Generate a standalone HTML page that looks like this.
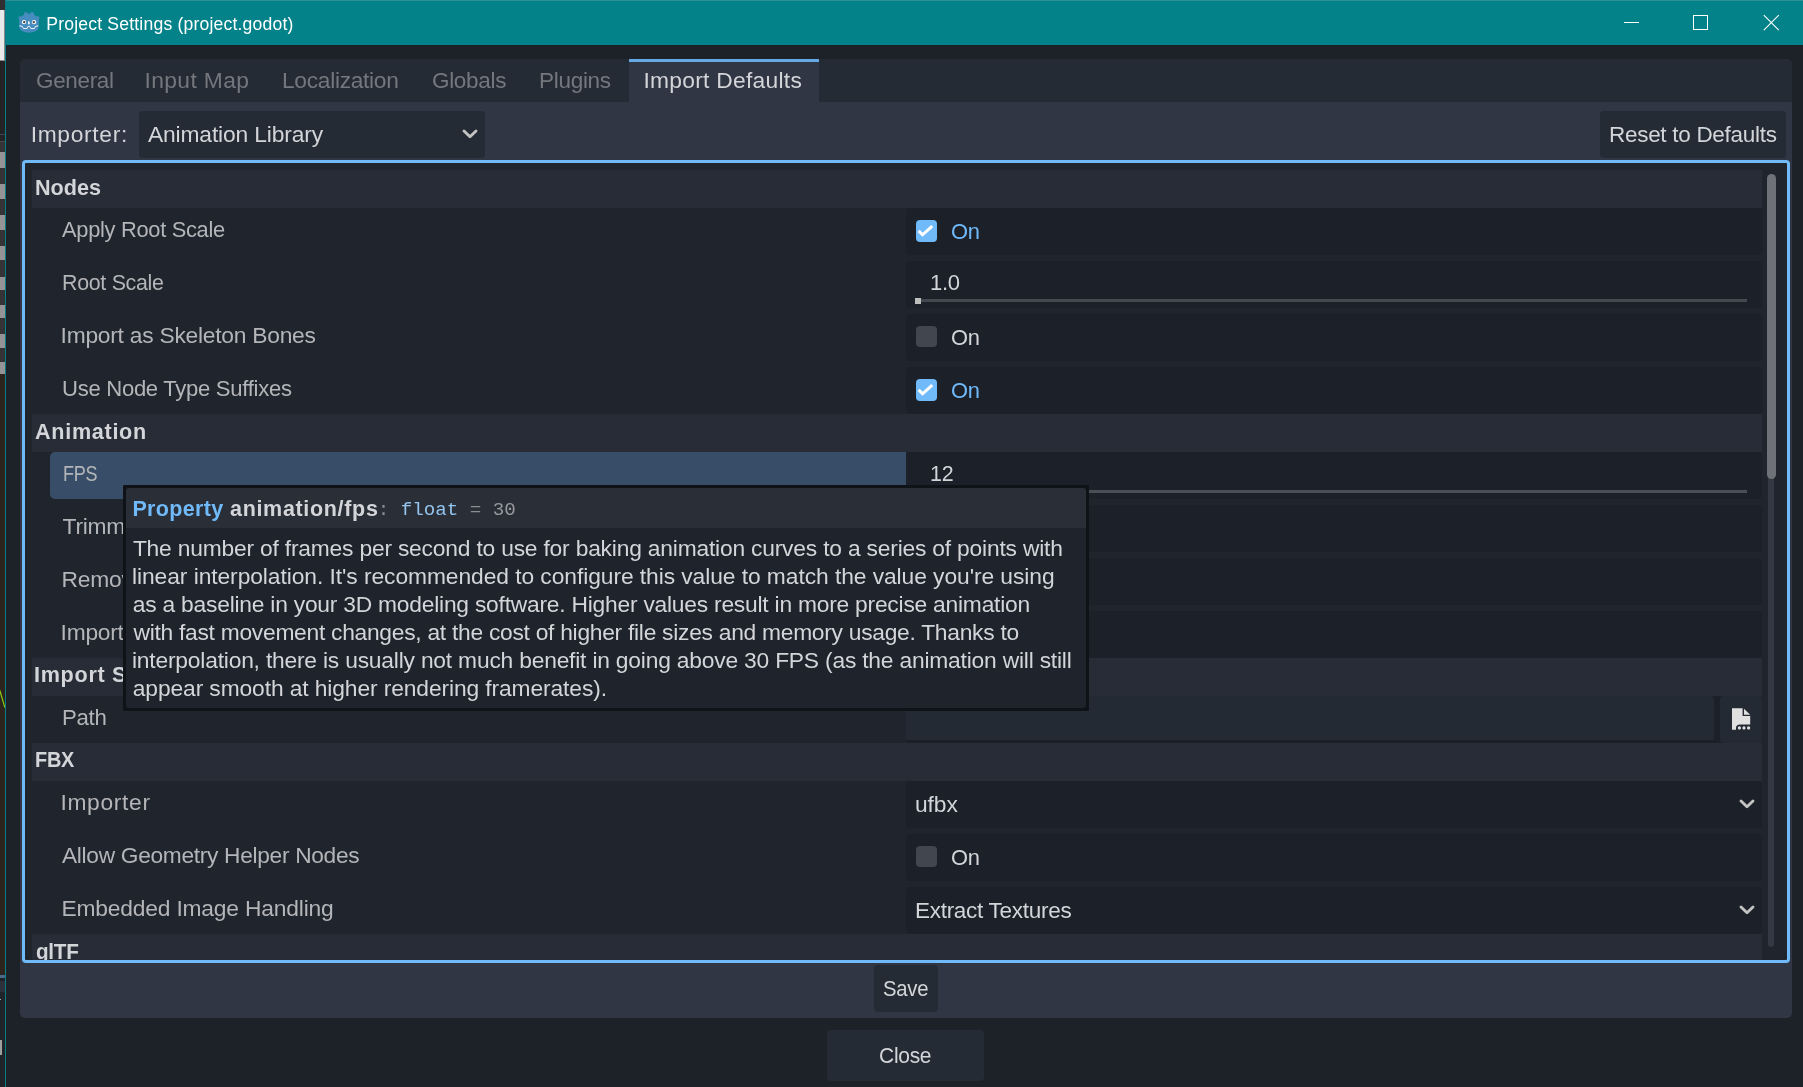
<!DOCTYPE html>
<html lang="en"><head><meta charset="utf-8"><title>Project Settings (project.godot)</title>
<style>
html,body{margin:0;padding:0}
body{width:1803px;height:1087px;overflow:hidden;position:relative;background:#1d2229;font-family:"Liberation Sans",sans-serif}
div,span.t,svg{position:absolute}
span.t{white-space:pre;display:block}
#root{left:0;top:0;width:1803px;height:1087px;overflow:hidden;will-change:transform}
</style></head><body><div id="root">

<div style="left:0px;top:0px;width:5px;height:1087px;background:#232325;"></div>
<div style="left:0px;top:0px;width:5px;height:10px;background:#303032;"></div>
<div style="left:0px;top:10px;width:5px;height:51px;background:#8a8a8c;"></div>
<div style="left:0px;top:10px;width:4px;height:50px;background:#e9e9ea;"></div>
<div style="left:0px;top:134px;width:5px;height:1px;background:#3a4656;"></div>
<div style="left:0px;top:141px;width:5px;height:1px;background:#4a4a4c;"></div>
<div style="left:0px;top:142px;width:5px;height:232px;background:#343436;"></div>
<div style="left:0px;top:152px;width:5px;height:16px;background:#949496;"></div>
<div style="left:0px;top:184px;width:5px;height:15px;background:#949496;"></div>
<div style="left:0px;top:215px;width:5px;height:15px;background:#949496;"></div>
<div style="left:0px;top:246px;width:5px;height:14px;background:#949496;"></div>
<div style="left:0px;top:277px;width:5px;height:13px;background:#949496;"></div>
<div style="left:0px;top:305px;width:5px;height:13px;background:#949496;"></div>
<div style="left:0px;top:334px;width:5px;height:14px;background:#949496;"></div>
<div style="left:0px;top:362px;width:5px;height:12px;background:#949496;"></div>
<div style="left:0px;top:374px;width:5px;height:601px;background:#2d251d;"></div>
<svg style="left:0;top:685px" width="5" height="28" viewBox="0 0 5 28"><path d="M-0.3 5.2 L5 22.8" stroke="#8ccf12" stroke-width="1.2" fill="none"/></svg>
<div style="left:0px;top:975px;width:5px;height:3px;background:#4a6a8a;"></div>
<div style="left:0px;top:978px;width:5px;height:3px;background:#1e2228;"></div>
<div style="left:0px;top:981px;width:5px;height:11px;background:#2c313c;"></div>
<div style="left:0px;top:992px;width:5px;height:95px;background:#1f232a;"></div>
<div style="left:0px;top:999px;width:1px;height:1px;background:#b0b0b0;"></div>
<div style="left:0px;top:1040px;width:1.5px;height:15px;background:#a0a0a0;"></div>
<div style="left:5px;top:0px;width:1px;height:1087px;background:#0a7c84;"></div>
<div style="left:6px;top:0px;width:1797px;height:45px;background:#03828a;"></div>
<div style="left:6px;top:0px;width:1797px;height:1px;background:#2b9198;"></div>
<svg style="left:17px;top:11px" width="24" height="23" viewBox="0 0 24 23"><path d="M1.2 6.9 L2.9 5 L4.3 5.4 L6 4.5 Q6.6 3.8 7.2 3.4 L7.2 1.4 Q8.6 0.9 10.1 1.2 L10.5 2.7 Q12 2.5 13.5 2.7 L13.9 1.2 Q15.4 0.9 16.8 1.4 L16.8 3.4 Q17.4 3.8 18 4.5 L19.7 5.4 L21.1 5 L22.8 6.9 L21.8 8.4 Q21.9 11 21.7 14.6 Q21.7 18 20.5 19 Q17 21.7 12 21.7 Q7 21.7 3.5 19 Q2.3 18 2.3 14.6 Q2.1 11 2.2 8.4 Z" fill="#478cbf"/><circle cx="7" cy="11.2" r="2.1" fill="#fff"/><circle cx="17" cy="11.2" r="2.1" fill="#fff"/><circle cx="7.2" cy="11.2" r="1.15" fill="#414042"/><circle cx="16.8" cy="11.2" r="1.15" fill="#414042"/><rect x="11.05" y="10.3" width="1.6" height="3.2" rx=".8" fill="#fff"/><path d="M2.3 14.9 L5.2 15.3 L6.5 17.5 H10.1 L11 15.4 H12.6 L13.9 17.5 H17.5 L18.4 15.3 L21.3 14.9" stroke="#fff" stroke-width=".9" fill="none"/></svg>
<div style="left:1624px;top:22px;width:15px;height:1px;background:#fff;"></div>
<div style="left:1693px;top:15px;width:13px;height:13px;background:transparent;border:1px solid #fff"></div>
<svg style="left:1762px;top:14px" width="18" height="18" viewBox="0 0 18 18"><path d="M1.8 1.2 L16.8 16.2 M16.8 1.2 L1.8 16.2" stroke="#fff" stroke-width="1.1" fill="none"/></svg>
<div style="left:20px;top:59px;width:1772px;height:43px;background:#252b34;border-radius:5px 5px 0 0"></div>
<div style="left:20px;top:102px;width:1772px;height:916px;background:#303643;border-radius:0 0 5px 5px"></div>
<div style="left:629px;top:59px;width:190px;height:43px;background:#303643;"></div>
<div style="left:629px;top:59px;width:190px;height:3px;background:#67a9e2;"></div>
<div style="left:139px;top:111px;width:346px;height:47px;background:#252b34;border-radius:4px"></div>
<div style="left:1600px;top:111px;width:186px;height:47px;background:#252b34;border-radius:4px"></div>
<svg style="left:460px;top:126px" width="20" height="16" viewBox="0 0 20 16"><path d="M4 5 L10 10.8 L16 5" stroke="#c3c3c3" stroke-width="2.9" stroke-linecap="round" stroke-linejoin="round" fill="none"/></svg>
<div style="left:22px;top:160px;width:1762px;height:797px;background:#20242d;border:3px solid #70bafa;border-radius:4px"></div>
<div style="left:25px;top:163px;width:1762px;height:797px;overflow:hidden">
<div style="left:7px;top:7px;width:1730px;height:38px;background:#282c36;"></div>
<div style="left:7px;top:251px;width:1730px;height:38px;background:#282c36;"></div>
<div style="left:7px;top:495px;width:1730px;height:38px;background:#282c36;"></div>
<div style="left:7px;top:580px;width:1730px;height:38px;background:#282c36;"></div>
<div style="left:7px;top:771px;width:1730px;height:38px;background:#282c36;"></div>
<div style="left:881px;top:45px;width:856px;height:47px;background:#1c2029;border-radius:4px"></div>
<div style="left:881px;top:98px;width:856px;height:47px;background:#1c2029;border-radius:4px"></div>
<div style="left:881px;top:151px;width:856px;height:47px;background:#1c2029;border-radius:4px"></div>
<div style="left:881px;top:204px;width:856px;height:47px;background:#1c2029;border-radius:4px"></div>
<div style="left:881px;top:289px;width:856px;height:47px;background:#1c2029;border-radius:4px"></div>
<div style="left:881px;top:342px;width:856px;height:47px;background:#1c2029;border-radius:4px"></div>
<div style="left:881px;top:395px;width:856px;height:47px;background:#1c2029;border-radius:4px"></div>
<div style="left:881px;top:448px;width:856px;height:47px;background:#1c2029;border-radius:4px"></div>
<div style="left:881px;top:618px;width:856px;height:47px;background:#1c2029;border-radius:4px"></div>
<div style="left:881px;top:671px;width:856px;height:47px;background:#1c2029;border-radius:4px"></div>
<div style="left:881px;top:724px;width:856px;height:47px;background:#1c2029;border-radius:4px"></div>
<div style="left:25px;top:289px;width:856px;height:47px;background:#384e68;border-radius:5px 0 0 5px"></div>
<div style="left:881px;top:533px;width:856px;height:47px;background:#1c2029;border-radius:5px"></div>
<div style="left:881px;top:533px;width:808px;height:47px;background:#242a34;border-radius:4px 4px 0 0"></div>
<div style="left:881px;top:577px;width:808px;height:3px;background:#1b1f27;"></div>
<div style="left:1695px;top:533px;width:42px;height:47px;background:#242a34;border-radius:4px"></div>
<div style="left:1743px;top:13px;width:6px;height:771px;background:#343842;border-radius:3px"></div>
<div style="left:1741.6px;top:11.300000000000011px;width:9px;height:304.7px;background:#6e7178;border-radius:5px"></div>
</div>
<div style="left:916.2px;top:220px;width:21px;height:22px;background:#70bafa;border-radius:4px"></div><svg style="left:916.2px;top:220px" width="21" height="22" viewBox="0 0 21 22"><path d="M2.6 10.9 L6.6 14.8 L16.2 6.1" stroke="#fff" stroke-width="3" fill="none" stroke-linejoin="miter"/></svg>
<div style="left:916px;top:326px;width:21px;height:21px;background:#42464f;border-radius:4px"></div>
<div style="left:916.2px;top:379px;width:21px;height:22px;background:#70bafa;border-radius:4px"></div><svg style="left:916.2px;top:379px" width="21" height="22" viewBox="0 0 21 22"><path d="M2.6 10.9 L6.6 14.8 L16.2 6.1" stroke="#fff" stroke-width="3" fill="none" stroke-linejoin="miter"/></svg>
<div style="left:916.2px;top:846.3px;width:21px;height:21px;background:#42464f;border-radius:4px"></div>
<div style="left:916px;top:517px;width:21px;height:21px;background:#42464f;border-radius:4px"></div>
<div style="left:916.2px;top:570px;width:21px;height:22px;background:#70bafa;border-radius:4px"></div><svg style="left:916.2px;top:570px" width="21" height="22" viewBox="0 0 21 22"><path d="M2.6 10.9 L6.6 14.8 L16.2 6.1" stroke="#fff" stroke-width="3" fill="none" stroke-linejoin="miter"/></svg>
<div style="left:916px;top:623px;width:21px;height:21px;background:#42464f;border-radius:4px"></div>
<div style="left:918px;top:299px;width:829px;height:3px;background:#45484f;"></div>
<div style="left:915px;top:297.5px;width:6px;height:6.5px;background:#bebebe;"></div>
<div style="left:918px;top:490px;width:829px;height:3px;background:#4b4e57;"></div>
<svg style="left:1737px;top:796px" width="20" height="16" viewBox="0 0 20 16"><path d="M4 5 L10 10.8 L16 5" stroke="#c3c3c3" stroke-width="2.9" stroke-linecap="round" stroke-linejoin="round" fill="none"/></svg>
<svg style="left:1737px;top:902px" width="20" height="16" viewBox="0 0 20 16"><path d="M4 5 L10 10.8 L16 5" stroke="#c3c3c3" stroke-width="2.9" stroke-linecap="round" stroke-linejoin="round" fill="none"/></svg>
<svg style="left:1731px;top:707px" width="21" height="24" viewBox="0 0 21 24"><path d="M1 1.3 H11.6 V9 H19.2 V17.4 H9 Q5 17.4 5 21 V22.7 H1 Z" fill="#e0e0e0"/><path d="M13 1.8 L19.2 7.8 H13 Z" fill="#e0e0e0"/><circle cx="8.4" cy="20.9" r="1.6" fill="#e0e0e0"/><circle cx="13" cy="20.9" r="1.6" fill="#e0e0e0"/><circle cx="17.6" cy="20.9" r="1.6" fill="#e0e0e0"/></svg>
<div style="left:874px;top:965px;width:64px;height:47px;background:#252b34;border-radius:4px"></div>
<div style="left:827px;top:1030px;width:157px;height:51px;background:#252b34;border-radius:4px"></div>
<span class="t" style="left:46.30px;top:13px;font-size:17.6px;line-height:22px;color:#ffffff;letter-spacing:0.178px;">Project Settings (project.godot)</span>
<span class="t" style="left:35.72px;top:67px;font-size:22.8px;line-height:27px;color:#74777e;letter-spacing:-0.300px;transform:scaleX(0.9840);transform-origin:0 0;">General</span>
<span class="t" style="left:144.50px;top:67px;font-size:22.8px;line-height:27px;color:#74777e;letter-spacing:0.387px;">Input Map</span>
<span class="t" style="left:281.80px;top:67px;font-size:22.8px;line-height:27px;color:#74777e;letter-spacing:-0.300px;transform:scaleX(0.9981);transform-origin:0 0;">Localization</span>
<span class="t" style="left:431.51px;top:67px;font-size:22.8px;line-height:27px;color:#74777e;letter-spacing:-0.300px;transform:scaleX(0.9852);transform-origin:0 0;">Globals</span>
<span class="t" style="left:538.81px;top:67px;font-size:22.8px;line-height:27px;color:#74777e;letter-spacing:-0.300px;transform:scaleX(0.9878);transform-origin:0 0;">Plugins</span>
<span class="t" style="left:643.40px;top:67px;font-size:22.8px;line-height:27px;color:#d3d5d9;letter-spacing:0.274px;">Import Defaults</span>
<span class="t" style="left:30.70px;top:121px;font-size:22.8px;line-height:27px;color:#d3d5d9;letter-spacing:0.678px;">Importer:</span>
<span class="t" style="left:148.00px;top:121px;font-size:22.8px;line-height:27px;color:#d3d5d9;letter-spacing:-0.143px;">Animation Library</span>
<span class="t" style="left:1608.51px;top:121px;font-size:22.8px;line-height:27px;color:#d3d5d9;letter-spacing:-0.300px;transform:scaleX(0.9872);transform-origin:0 0;">Reset to Defaults</span>
<span class="t" style="left:35.00px;top:175px;font-size:21.6px;line-height:26px;color:#d3d5d9;font-weight:700;">Nodes</span>
<span class="t" style="left:35.00px;top:419px;font-size:21.6px;line-height:26px;color:#d3d5d9;font-weight:700;letter-spacing:0.703px;">Animation</span>
<span class="t" style="left:34.00px;top:662px;font-size:21.6px;line-height:26px;color:#d3d5d9;font-weight:700;letter-spacing:0.703px;">Import Script</span>
<span class="t" style="left:34.68px;top:747px;font-size:21.6px;line-height:26px;color:#d3d5d9;font-weight:700;letter-spacing:-0.300px;transform:scaleX(0.9221);transform-origin:0 0;">FBX</span>
<div style="left:25px;top:930px;width:1762px;height:29.6px;overflow:hidden">
<span class="t" style="left:10.60px;top:9px;font-size:21.6px;line-height:26px;color:#d3d5d9;font-weight:700;letter-spacing:-0.300px;transform:scaleX(0.9577);transform-origin:0 0;">glTF</span>
</div>
<span class="t" style="left:62.00px;top:216px;font-size:22.8px;line-height:27px;color:#b4b5b8;letter-spacing:-0.300px;transform:scaleX(0.9576);transform-origin:0 0;">Apply Root Scale</span>
<span class="t" style="left:61.66px;top:269px;font-size:22.8px;line-height:27px;color:#b4b5b8;letter-spacing:-0.300px;transform:scaleX(0.9371);transform-origin:0 0;">Root Scale</span>
<span class="t" style="left:60.60px;top:322px;font-size:22.8px;line-height:27px;color:#b4b5b8;letter-spacing:-0.250px;">Import as Skeleton Bones</span>
<span class="t" style="left:61.63px;top:375px;font-size:22.8px;line-height:27px;color:#b4b5b8;letter-spacing:-0.300px;transform:scaleX(0.9685);transform-origin:0 0;">Use Node Type Suffixes</span>
<span class="t" style="left:62.51px;top:460px;font-size:22.8px;line-height:27px;color:#b4b5b8;letter-spacing:-0.300px;transform:scaleX(0.7924);transform-origin:0 0;">FPS</span>
<span class="t" style="left:62.60px;top:513px;font-size:22.8px;line-height:27px;color:#b4b5b8;letter-spacing:-0.250px;">Trimming</span>
<span class="t" style="left:61.60px;top:566px;font-size:22.8px;line-height:27px;color:#b4b5b8;letter-spacing:-0.250px;">Remove Immutable Tracks</span>
<span class="t" style="left:60.60px;top:619px;font-size:22.8px;line-height:27px;color:#b4b5b8;letter-spacing:-0.250px;">Import Rest as RESET</span>
<span class="t" style="left:62.03px;top:704px;font-size:22.8px;line-height:27px;color:#b4b5b8;letter-spacing:-0.300px;transform:scaleX(0.9748);transform-origin:0 0;">Path</span>
<span class="t" style="left:60.40px;top:789px;font-size:22.8px;line-height:27px;color:#b4b5b8;letter-spacing:0.674px;">Importer</span>
<span class="t" style="left:62.20px;top:842px;font-size:22.8px;line-height:27px;color:#b4b5b8;letter-spacing:-0.300px;transform:scaleX(0.9959);transform-origin:0 0;">Allow Geometry Helper Nodes</span>
<span class="t" style="left:61.40px;top:895px;font-size:22.8px;line-height:27px;color:#b4b5b8;letter-spacing:-0.177px;">Embedded Image Handling</span>
<span class="t" style="left:950.74px;top:218px;font-size:22.8px;line-height:27px;color:#70bafa;letter-spacing:-0.300px;transform:scaleX(0.9602);transform-origin:0 0;">On</span>
<span class="t" style="left:930.03px;top:269px;font-size:22.8px;line-height:27px;color:#d3d5d9;letter-spacing:-0.300px;transform:scaleX(0.9690);transform-origin:0 0;">1.0</span>
<span class="t" style="left:950.74px;top:324px;font-size:22.8px;line-height:27px;color:#d3d5d9;letter-spacing:-0.300px;transform:scaleX(0.9602);transform-origin:0 0;">On</span>
<span class="t" style="left:950.74px;top:377px;font-size:22.8px;line-height:27px;color:#70bafa;letter-spacing:-0.300px;transform:scaleX(0.9602);transform-origin:0 0;">On</span>
<span class="t" style="left:930.06px;top:460px;font-size:22.8px;line-height:27px;color:#d3d5d9;letter-spacing:-0.300px;transform:scaleX(0.9410);transform-origin:0 0;">12</span>
<span class="t" style="left:950.74px;top:515px;font-size:22.8px;line-height:27px;color:#d3d5d9;letter-spacing:-0.300px;transform:scaleX(0.9602);transform-origin:0 0;">On</span>
<span class="t" style="left:950.74px;top:568px;font-size:22.8px;line-height:27px;color:#70bafa;letter-spacing:-0.300px;transform:scaleX(0.9602);transform-origin:0 0;">On</span>
<span class="t" style="left:950.74px;top:621px;font-size:22.8px;line-height:27px;color:#d3d5d9;letter-spacing:-0.300px;transform:scaleX(0.9602);transform-origin:0 0;">On</span>
<span class="t" style="left:914.90px;top:791px;font-size:22.8px;line-height:27px;color:#d3d5d9;letter-spacing:-0.064px;">ufbx</span>
<span class="t" style="left:950.74px;top:844px;font-size:22.8px;line-height:27px;color:#d3d5d9;letter-spacing:-0.300px;transform:scaleX(0.9602);transform-origin:0 0;">On</span>
<span class="t" style="left:914.91px;top:897px;font-size:22.8px;line-height:27px;color:#d3d5d9;letter-spacing:-0.300px;transform:scaleX(0.9884);transform-origin:0 0;">Extract Textures</span>
<span class="t" style="left:882.61px;top:975px;font-size:22.8px;line-height:27px;color:#d3d5d9;letter-spacing:-0.300px;transform:scaleX(0.8910);transform-origin:0 0;">Save</span>
<span class="t" style="left:878.58px;top:1042px;font-size:22.8px;line-height:27px;color:#d3d5d9;letter-spacing:-0.300px;transform:scaleX(0.9205);transform-origin:0 0;">Close</span>
<div style="left:123px;top:485px;width:966px;height:226px;background:#0f1216;border-radius:1px"></div>
<div style="left:126px;top:488px;width:960px;height:220px;background:#1f232b;border-radius:3px"></div>
<div style="left:126px;top:488px;width:960px;height:40px;background:#2a2e37;border-radius:3px 3px 0 0"></div>
<span class="t" style="left:132.40px;top:496px;font-size:21.5px;line-height:26px;color:#70bafa;font-weight:700;letter-spacing:0.335px;">Property</span>
<span class="t" style="left:230.00px;top:496px;font-size:21.5px;line-height:26px;color:#d3d5d9;font-weight:700;letter-spacing:0.675px;">animation/fps</span>
<span class="t" style="left:377.65px;top:499px;font-size:19.2px;line-height:23px;color:#8b8e95;font-family:'Liberation Mono', monospace;">:</span>
<span class="t" style="left:400.67px;top:499px;font-size:19.2px;line-height:23px;color:#94c4ee;font-family:'Liberation Mono', monospace;">float</span>
<span class="t" style="left:469.73px;top:499px;font-size:19.2px;line-height:23px;color:#8b8e95;font-family:'Liberation Mono', monospace;">=</span>
<span class="t" style="left:492.75px;top:499px;font-size:19.2px;line-height:23px;color:#96989d;font-family:'Liberation Mono', monospace;">30</span>
<span class="t" style="left:132.90px;top:535px;font-size:22.8px;line-height:27px;color:#d3d5d9;letter-spacing:-0.194px;">The number of frames per second to use for baking animation curves to a series of points with</span>
<span class="t" style="left:132.00px;top:563px;font-size:22.8px;line-height:27px;color:#d3d5d9;letter-spacing:-0.066px;">linear interpolation. It's recommended to configure this value to match the value you're using</span>
<span class="t" style="left:132.80px;top:591px;font-size:22.8px;line-height:27px;color:#d3d5d9;letter-spacing:-0.225px;">as a baseline in your 3D modeling software. Higher values result in more precise animation</span>
<span class="t" style="left:133.50px;top:619px;font-size:22.8px;line-height:27px;color:#d3d5d9;letter-spacing:-0.273px;">with fast movement changes, at the cost of higher file sizes and memory usage. Thanks to</span>
<span class="t" style="left:132.00px;top:647px;font-size:22.8px;line-height:27px;color:#d3d5d9;letter-spacing:-0.199px;">interpolation, there is usually not much benefit in going above 30 FPS (as the animation will still</span>
<span class="t" style="left:132.80px;top:675px;font-size:22.8px;line-height:27px;color:#d3d5d9;letter-spacing:-0.106px;">appear smooth at higher rendering framerates).</span>
</div></body></html>
